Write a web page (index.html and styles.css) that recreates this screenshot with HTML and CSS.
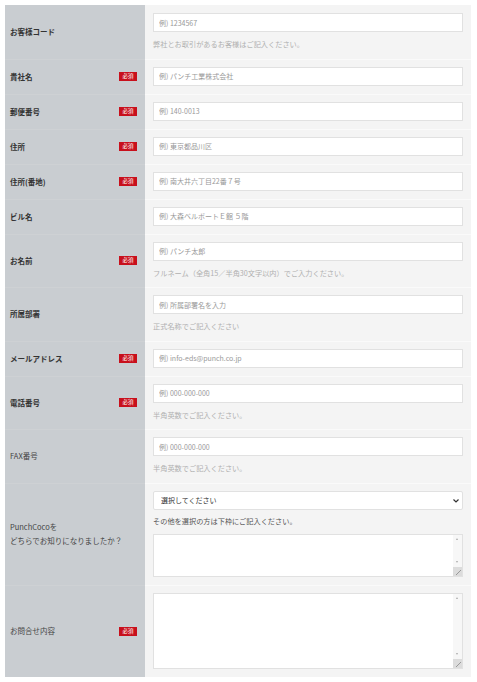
FILE: index.html
```html
<!DOCTYPE html>
<html>
<head>
	<meta charset="utf-8">
	<title>お問合せフォーム</title>
	<link rel="stylesheet" href="styles.css">
</head>
<body>
	<form class="contact">
		<div class="row">
			<div class="label"><span>お客様コード</span></div>
			<div class="field">
				<input type="text" placeholder="例) 1234567">
				<p class="help">弊社とお取引があるお客様はご記入ください。</p>
			</div>
		</div>
		<div class="row">
			<div class="label"><span>貴社名</span><em class="req">必須</em></div>
			<div class="field"><input type="text" placeholder="例) パンチ工業株式会社"></div>
		</div>
		<div class="row">
			<div class="label"><span>郵便番号</span><em class="req">必須</em></div>
			<div class="field"><input type="text" placeholder="例) 140-0013"></div>
		</div>
		<div class="row">
			<div class="label"><span>住所</span><em class="req">必須</em></div>
			<div class="field"><input type="text" placeholder="例) 東京都品川区"></div>
		</div>
		<div class="row">
			<div class="label"><span>住所(番地)</span><em class="req">必須</em></div>
			<div class="field"><input type="text" placeholder="例) 南大井六丁目22番７号"></div>
		</div>
		<div class="row">
			<div class="label"><span>ビル名</span></div>
			<div class="field"><input type="text" placeholder="例) 大森ベルポートＥ館 ５階"></div>
		</div>
		<div class="row">
			<div class="label"><span>お名前</span><em class="req">必須</em></div>
			<div class="field">
				<input type="text" placeholder="例) パンチ太郎">
				<p class="help">フルネーム（全角15／半角30文字以内）でご入力ください。</p>
			</div>
		</div>
		<div class="row">
			<div class="label"><span>所属部署</span></div>
			<div class="field">
				<input type="text" placeholder="例) 所属部署名を入力">
				<p class="help">正式名称でご記入ください</p>
			</div>
		</div>
		<div class="row">
			<div class="label"><span>メールアドレス</span><em class="req">必須</em></div>
			<div class="field"><input type="email" placeholder="例) info-eds@punch.co.jp"></div>
		</div>
		<div class="row">
			<div class="label"><span>電話番号</span><em class="req">必須</em></div>
			<div class="field">
				<input type="tel" placeholder="例) 000-000-000">
				<p class="help">半角英数でご記入ください。</p>
			</div>
		</div>
		<div class="row">
			<div class="label light"><span>FAX番号</span></div>
			<div class="field">
				<input type="tel" placeholder="例) 000-000-000">
				<p class="help">半角英数でご記入ください。</p>
			</div>
		</div>
		<div class="row">
			<div class="label light"><span>PunchCocoを<br>どちらでお知りになりましたか？</span></div>
			<div class="field">
				<div class="select-wrap">
					<select>
						<option>選択してください</option>
					</select>
					<svg class="chevron" width="6" height="4" viewBox="0 0 6 4"><path d="M0.5 0.5 L3 3 L5.5 0.5" fill="none" stroke="#333" stroke-width="1.2"/></svg>
				</div>
				<p class="note">その他を選択の方は下枠にご記入ください。</p>
				<div class="area-wrap small">
					<textarea></textarea>
					<div class="scroll"><span class="up"></span><span class="down"></span><span class="grip"></span></div>
				</div>
			</div>
		</div>
		<div class="row">
			<div class="label light"><span>お問合せ内容</span><em class="req">必須</em></div>
			<div class="field">
				<div class="area-wrap large">
					<textarea></textarea>
					<div class="scroll"><span class="up"></span><span class="down"></span><span class="grip"></span></div>
				</div>
			</div>
		</div>
	</form>
</body>
</html>
```

FILE: styles.css
```css
body {
	margin: 0;
	background: #fff;
	font-family: "Noto Sans CJK JP", sans-serif;
	color: #333;
}

.contact {
	width: 466px;
	margin: 5px 6px 5px 5px;
}

.row {
	display: flex;
}

.label {
	width: 140px;
	box-sizing: border-box;
	padding: 0 8px 0 5px;
	background: #c9cdd1;
	display: flex;
	align-items: center;
	justify-content: space-between;
	font-size: 7.5px;
	font-weight: bold;
	line-height: 14px;
	color: #333;
}

.label.light {
	font-weight: normal;
	color: #444;
}

.req {
	font-style: normal;
	font-weight: normal;
	background: #c8101c;
	color: #fff;
	font-size: 5.5px;
	width: 18px;
	height: 9px;
	line-height: 9px;
	text-align: center;
}

.field {
	flex: 1;
	background: #f4f4f4;
	padding: 8px;
}

.row + .row .label {
	border-top: 1px solid #ced1d4;
}

.row + .row .field {
	border-top: 1px solid #fafafa;
	padding-top: 7px;
}

input,
select,
textarea {
	display: block;
	width: 100%;
	box-sizing: border-box;
	border: 1px solid #e1e1e1;
	background: #fff;
	font-family: inherit;
	margin: 0;
	outline: none;
}

input {
	height: 19px;
	padding: 0 5px;
	font-size: 7px;
}

input::placeholder {
	color: #999;
}

.help {
	margin: 6px 0 0;
	font-size: 7.2px;
	line-height: 12.5px;
	color: #b0b0b0;
}

.select-wrap {
	position: relative;
}

select {
	appearance: none;
	height: 19px;
	padding: 0 7px;
	font-size: 7px;
	color: #333;
	border-radius: 2px;
}

.chevron {
	position: absolute;
	right: 4px;
	top: 8px;
}

.note {
	margin: 4px 0 6px;
	font-size: 7.2px;
	line-height: 14px;
	color: #555;
}

.area-wrap {
	position: relative;
}

.area-wrap.small {
	height: 43px;
}

.area-wrap.large {
	height: 76px;
}

textarea {
	height: 100%;
	resize: none;
	padding: 4px;
}

.scroll {
	position: absolute;
	top: 1px;
	right: 1px;
	bottom: 1px;
	width: 9px;
	background: #f7f7f7;
}

.up,
.down {
	position: absolute;
	left: 3px;
	width: 0;
	height: 0;
	border-left: 1.5px solid transparent;
	border-right: 1.5px solid transparent;
}

.up {
	top: 3px;
	border-bottom: 2px solid #aaa;
}

.down {
	bottom: 13px;
	border-top: 2px solid #aaa;
}

.grip {
	position: absolute;
	left: 0;
	right: 0;
	bottom: 0;
	height: 9px;
	background:
		linear-gradient(135deg, transparent 45%, #999 45%, #999 55%, transparent 55%) 3px 3px / 5px 5px no-repeat,
		#dcdcdc;
}
```
